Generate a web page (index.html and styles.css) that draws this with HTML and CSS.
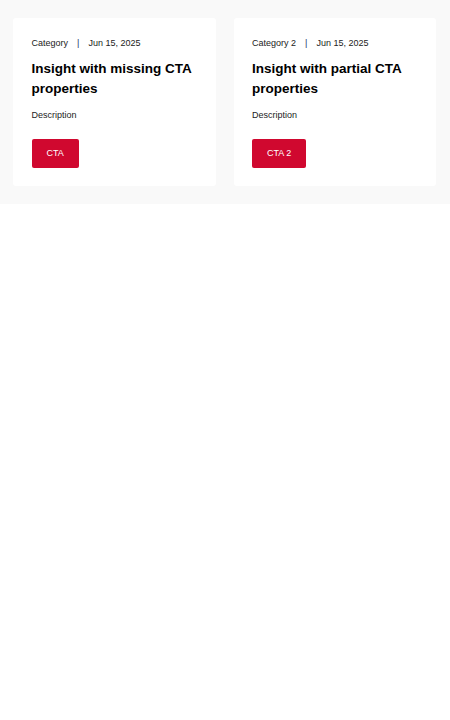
FILE: index.html
```html
<!DOCTYPE html>
<html>
<head>
<meta charset="utf-8">
<link rel="stylesheet" href="styles.css">
</head>
<body>
<section class="insights">
  <article class="card">
    <div class="meta"><span>Category</span><span class="sep">|</span><span>Jun 15, 2025</span></div>
    <h2 class="title">Insight with missing CTA properties</h2>
    <p class="desc">Description</p>
    <a class="cta">CTA</a>
  </article>
  <article class="card">
    <div class="meta"><span>Category 2</span><span class="sep">|</span><span>Jun 15, 2025</span></div>
    <h2 class="title">Insight with partial CTA properties</h2>
    <p class="desc">Description</p>
    <a class="cta">CTA 2</a>
  </article>
</section>
</body>
</html>
```
FILE: styles.css
```css
html, body { margin: 0; padding: 0; background: #fff; }
body { font-family: "Liberation Sans", Arial, sans-serif; color: #111; }
.insights {
  background: #f9f9f9;
  padding: 18px 14px 18px 13px;
  display: grid;
  grid-template-columns: 1fr 1fr;
  gap: 18px;
}
.card {
  background: #fff;
  border-radius: 3px;
  padding: 18px 18px 18px 18.5px;
  display: flex;
  flex-direction: column;
  align-items: flex-start;
}
.meta {
  font-size: 9px;
  line-height: 14px;
  color: #222;
  display: flex;
  gap: 9px;
}
.sep { color: #1f3a6b; }
.title {
  margin: 9px 0 0;
  font-size: 13.5px;
  line-height: 20px;
  font-weight: 700;
  color: #000;
}
.desc {
  margin: 9px 0 0;
  font-size: 9px;
  line-height: 14px;
  color: #222;
}
.cta {
  margin-top: 17px;
  background: #d0082f;
  color: #fff;
  font-size: 9px;
  line-height: 11px;
  padding: 9px 15px;
  border-radius: 2px;
}
```
